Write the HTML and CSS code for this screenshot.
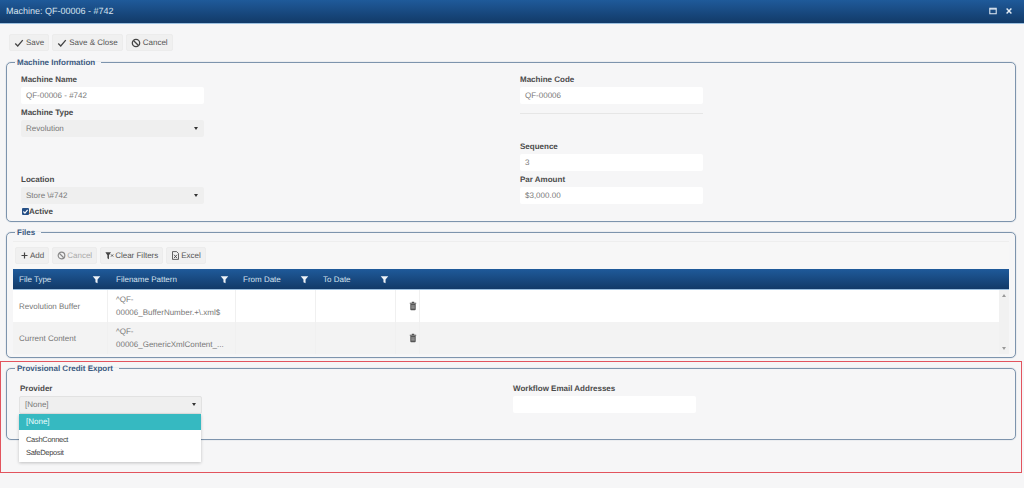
FILE: index.html
```html
<!DOCTYPE html>
<html lang="en">
<head>
<meta charset="utf-8">
<title>Machine: QF-00006 - #742</title>
<link rel="stylesheet" href="styles.css">
</head>
<body>
<svg class="defs" width="0" height="0" aria-hidden="true">
  <symbol id="i-check" viewBox="0 0 12 12"><path d="M1.5 6.5 4.5 9.5 10.5 2.5" fill="none" stroke="currentColor" stroke-width="1.6"/></symbol>
  <symbol id="i-ban" viewBox="0 0 12 12"><circle cx="6" cy="6" r="4.4" fill="none" stroke="currentColor" stroke-width="1.6"/><path d="M3 3 9 9" stroke="currentColor" stroke-width="1.6"/></symbol>
  <symbol id="i-plus" viewBox="0 0 12 12"><path d="M6 2V10M2 6H10" stroke="currentColor" stroke-width="1.6"/></symbol>
  <symbol id="i-funnel" viewBox="0 0 12 12"><path d="M1 1.5H11L7.4 6V11L4.6 9.5V6Z" fill="currentColor"/></symbol>
  <symbol id="i-clear" viewBox="0 0 12 12"><path d="M0.5 1.5H8L5.3 5.5V11L3.2 9.7V5.5Z" fill="currentColor"/><path d="M8 4.5 11 7.5M11 4.5 8 7.5" stroke="currentColor" stroke-width="1.1"/></symbol>
  <symbol id="i-excel" viewBox="0 0 12 12"><path d="M2 .8H7.5L10 3.3V11.2H2Z" fill="none" stroke="currentColor" stroke-width="1.1"/><path d="M4 5 8 9.5M8 5 4 9.5" stroke="currentColor" stroke-width="1.2"/></symbol>
  <symbol id="i-trash" viewBox="0 0 10 12"><path d="M3.5 1.2H6.5M1 2.5H9" stroke="currentColor" stroke-width="1.3"/><path d="M1.6 3.5H8.4V10.2Q8.4 11.4 7.2 11.4H2.8Q1.6 11.4 1.6 10.2Z" fill="currentColor"/><path d="M2.8 6H7.2M2.8 8.4H7.2" stroke="#e8e8e8" stroke-width=".8"/></symbol>
</svg>

<header class="titlebar">
  <span class="title">Machine: QF-00006 - #742</span>
  <span class="win-actions">
    <svg class="win-icon" viewBox="0 0 10 10"><path d="M1 1.5H9V8.5H1Z" fill="none" stroke="currentColor" stroke-width="1.3"/><path d="M1 2.5H9" stroke="currentColor" stroke-width="1.5"/></svg>
    <svg class="win-icon" viewBox="0 0 10 10"><path d="M2 2 8 8M8 2 2 8" stroke="currentColor" stroke-width="1.8"/></svg>
  </span>
</header>

<main class="page">
  <div class="toolbar">
    <button class="btn"><svg class="ico"><use href="#i-check"/></svg>Save</button>
    <button class="btn"><svg class="ico"><use href="#i-check"/></svg>Save &amp; Close</button>
    <button class="btn"><svg class="ico"><use href="#i-ban"/></svg>Cancel</button>
  </div>

  <fieldset class="group group-info">
    <legend>Machine Information</legend>
    <div class="form-grid">
      <div class="field"><label>Machine Name</label><div class="input">QF-00006 - #742</div></div>
      <div class="field"><label>Machine Code</label><div class="input">QF-00006</div></div>
      <div class="field"><label>Machine Type</label><div class="select">Revolution<span class="caret"></span></div></div>
      <div class="field"><div class="rule"></div></div>
      <div class="field"></div>
      <div class="field"><label>Sequence</label><div class="input">3</div></div>
      <div class="field"><label>Location</label><div class="select">Store \#742<span class="caret"></span></div></div>
      <div class="field"><label>Par Amount</label><div class="input">$3,000.00</div></div>
    </div>
    <div class="active"><span class="checkbox"><svg viewBox="0 0 10 10"><path d="M2 5 4.2 7.4 8 2.6" fill="none" stroke="#fff" stroke-width="1.6"/></svg></span>Active</div>
  </fieldset>

  <fieldset class="group group-files">
    <legend>Files</legend>
    <div class="grid-panel">
      <div class="grid-toolbar">
        <button class="btn"><svg class="ico"><use href="#i-plus"/></svg>Add</button>
        <button class="btn is-disabled"><svg class="ico"><use href="#i-ban"/></svg>Cancel</button>
        <button class="btn"><svg class="ico"><use href="#i-clear"/></svg>Clear Filters</button>
        <button class="btn"><svg class="ico"><use href="#i-excel"/></svg>Excel</button>
      </div>
      <div class="grid-row grid-head">
        <div class="cell">File Type<svg class="funnel"><use href="#i-funnel"/></svg></div>
        <div class="cell">Filename Pattern<svg class="funnel"><use href="#i-funnel"/></svg></div>
        <div class="cell">From Date<svg class="funnel"><use href="#i-funnel"/></svg></div>
        <div class="cell">To Date<svg class="funnel"><use href="#i-funnel"/></svg></div>
        <div class="cell"></div>
      </div>
      <div class="grid-scroll">
        <div class="grid-body">
          <div class="grid-row">
            <div class="cell">Revolution Buffer</div>
            <div class="cell pattern">^QF-<br>00006_BufferNumber.+\.xml$</div>
            <div class="cell"></div>
            <div class="cell"></div>
            <div class="cell action"><svg class="trash"><use href="#i-trash"/></svg></div>
          </div>
          <div class="grid-row alt">
            <div class="cell">Current Content</div>
            <div class="cell pattern">^QF-<br>00006_GenericXmlContent_...</div>
            <div class="cell"></div>
            <div class="cell"></div>
            <div class="cell action"><svg class="trash"><use href="#i-trash"/></svg></div>
          </div>
        </div>
        <div class="scrollbar"><span class="arrow up"></span><span class="arrow down"></span></div>
      </div>
    </div>
  </fieldset>

  <fieldset class="group group-credit">
    <legend>Provisional Credit Export</legend>
    <div class="credit-grid">
      <div class="field provider">
        <label>Provider</label>
        <div class="select open">[None]<span class="caret"></span></div>
        <ul class="dropdown">
          <li class="selected">[None]</li>
          <li>CashConnect</li>
          <li>SafeDeposit</li>
        </ul>
      </div>
      <div class="field"><label>Workflow Email Addresses</label><div class="input"></div></div>
    </div>
  </fieldset>
  <div class="highlight"></div>
</main>
</body>
</html>
```
FILE: styles.css
```css
* { box-sizing: border-box; }
html, body { margin: 0; height: 100%; }
body {
  background: #f6f6f7;
  font-family: "Liberation Sans", Arial, sans-serif;
  font-size: 8px;
  color: #666;
  overflow: hidden;
  text-rendering: geometricPrecision;
}
.defs { position: absolute; }
.titlebar {
  height: 24px;
  display: flex;
  align-items: center;
  justify-content: space-between;
  padding: 0 11px 1px 6px;
  background: linear-gradient(#1f5a9a, #123a68);
  border-bottom: 1px solid #9cc0e0;
  color: #d6e2ee;
  font-size: 9px;
}
.win-actions { display: flex; gap: 8px; }
.win-icon { width: 8px; height: 8px; color: #e4ecf4; }
.page { position: relative; height: 464px; }
.toolbar { display: flex; gap: 3px; padding: 10px 0 0 9px; height: 33px; }
.btn {
  display: inline-flex;
  align-items: center;
  gap: 2px;
  height: 17px;
  padding: 0 4px;
  border: 1px solid #ececec;
  border-radius: 2px;
  background: #f0f0f0;
  font: 8px "Liberation Sans", Arial, sans-serif;
  text-rendering: geometricPrecision;
  color: #555;
}
.is-disabled { color: #aaa; }
.ico { width: 10px; height: 10px; color: #444; }
.is-disabled .ico { color: #888; }
.group {
  margin: 0 8px 0 6px;
  padding: 0;
  border: 1px solid #7d94ad;
  border-radius: 5px;
  box-shadow: 0 0 1px #8fa3b8;
  min-width: 0;
}
.group legend {
  margin-left: 8px;
  padding: 1px 6px 0 2px;
  font-size: 8px;
  line-height: 10px;
  font-weight: bold;
  color: #3b5a80;
}
.group-info { height: 165px; }
.group-info .form-grid { margin: 6px 0 0 14px; }
.group-files { height: 131px; margin-top: 5px; }
.group-files .grid-panel { margin: 3px 6px 0; }
.group-credit { height: 77px; margin-top: 5px; }
.group-credit .credit-grid { margin: 9px 0 0 13px; }
.form-grid { display: grid; grid-template-columns: 499px 183px; grid-auto-rows: 33.3px; }
.field { min-width: 0; position: relative; }
.field label {
  display: block;
  height: 13px;
  line-height: 12px;
  font-weight: bold;
  color: #4a4a4a;
}
.input, .select {
  position: relative;
  height: 17px;
  width: 183px;
  line-height: 17px;
  padding-left: 5px;
  border-radius: 2px;
  color: #777;
}
.input { background: #fff; }
.select { background: #efefef; }
.caret {
  position: absolute;
  right: 6px;
  top: 7px;
  border-left: 2.5px solid transparent;
  border-right: 2.5px solid transparent;
  border-top: 3.5px solid #333;
}
.rule { margin-top: 6px; width: 183px; height: 1px; background: #e6e6e6; }
.active {
  display: flex;
  align-items: center;
  margin: -1px 0 0 15px;
  height: 10px;
  font-weight: bold;
  color: #4a4a4a;
}
.checkbox { width: 7px; height: 7px; background: #254f86; border-radius: 1px; display: block; }
.checkbox svg { display: block; width: 7px; height: 7px; }
.grid-panel { display: flex; flex-direction: column; }
.grid-toolbar {
  display: flex;
  gap: 3px;
  height: 28px;
  padding: 5px 0 0 2px;
  background: #f7f7f7;
  border-top: 1px solid #eee;
}
.grid-toolbar .btn { gap: 1px; }
.grid-toolbar .ico { width: 9px; height: 9px; }
.grid-row { display: grid; grid-template-columns: 95px 128px 80px 80px 24px 1fr; }
.grid-head {
  height: 21px;
  background: linear-gradient(#1f5a9a, #123a68);
  border-bottom: 1px solid #9cc0e0;
  color: #d6e2ee;
}
.grid-head .cell {
  display: flex;
  align-items: center;
  justify-content: space-between;
  padding: 0 7px;
}
.grid-head .cell:first-child { padding-left: 6px; }
.grid-head .cell:nth-child(2) { padding-left: 8px; }
.funnel { width: 9px; height: 9px; color: #eef3f8; }
.grid-scroll { display: flex; height: 64px; }
.grid-body { flex: 1; min-width: 0; }
.grid-body .grid-row { height: 32px; background: #fff; }
.grid-body .grid-row.alt { background: #f3f3f3; }
.grid-body .cell {
  display: flex;
  align-items: center;
  padding: 0 6px;
  border-right: 1px solid #f0f0f0;
  color: #777;
}
.grid-body .pattern { display: block; padding: 4px 6px 0 8px; line-height: 12.5px; }
.grid-body .action { justify-content: flex-end; padding-right: 2px; }
.trash { width: 8px; height: 10px; color: #555; }
.scrollbar {
  width: 10px;
  background: #f1f1f1;
  display: flex;
  flex-direction: column;
  justify-content: space-between;
  align-items: center;
  padding: 4px 0;
}
.arrow { border-left: 2px solid transparent; border-right: 2px solid transparent; }
.arrow.up { border-bottom: 3px solid #999; }
.arrow.down { border-top: 3px solid #999; }
.credit-grid { display: grid; grid-template-columns: 493px 183px; }
.select.open { margin-left: -1px; background: #efefef; border: 1px solid #e2e2e2; height: 18px; line-height: 16px; padding-left: 5px; }
.select.open .caret { right: 5px; top: 6px; }
.dropdown {
  position: absolute;
  left: -1px;
  top: 31px;
  width: 182px;
  margin: 0;
  padding: 0 0 3px;
  list-style: none;
  background: #fff;
  box-shadow: 0 1px 3px rgba(0, 0, 0, .22);
  color: #444;
  z-index: 2;
}
.dropdown li { height: 13px; line-height: 13px; padding-left: 7px; font-size: 7.5px; letter-spacing: -.3px; }
.dropdown li.selected {
  height: 16px;
  line-height: 16px;
  margin-bottom: 3px;
  background: #36b9c1;
  color: #f2ffff;
  font-size: 8px;
  letter-spacing: 0;
}
.highlight {
  position: absolute;
  left: 0;
  top: 337px;
  width: 1022px;
  height: 112px;
  border: 1px solid #e2545e;
  pointer-events: none;
}
```
